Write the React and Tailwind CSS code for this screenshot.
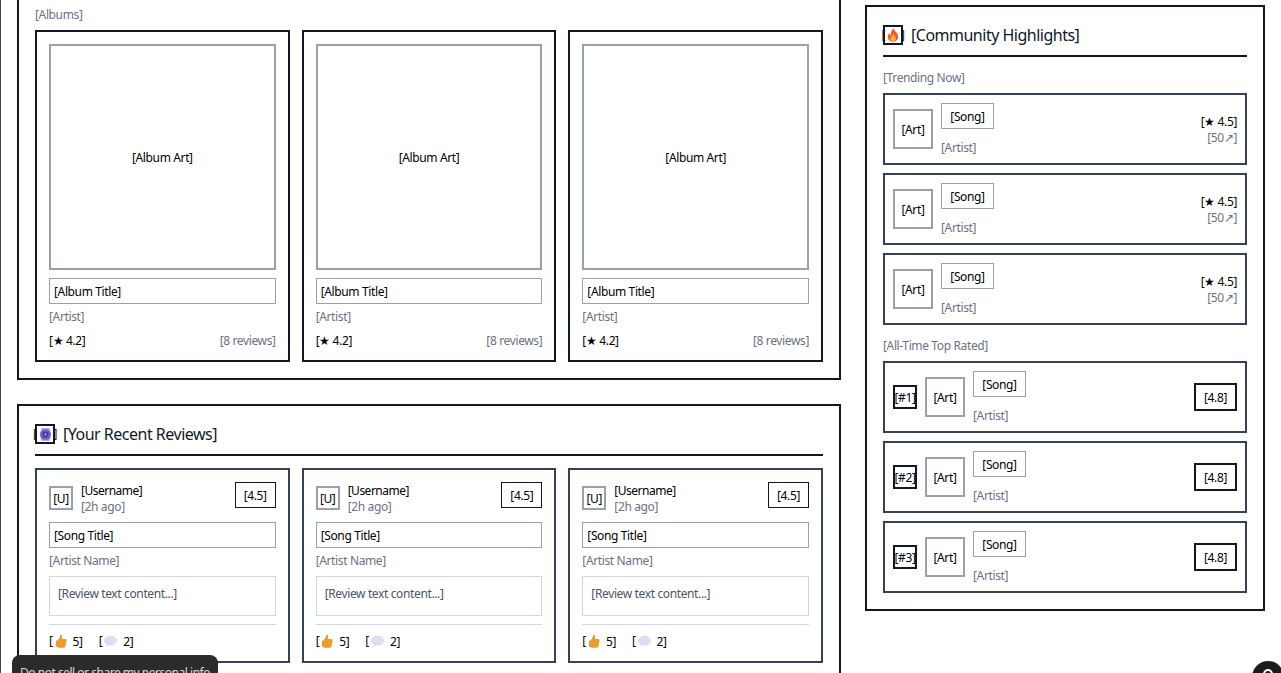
const font = { fontFamily: '"Noto Sans", sans-serif' };

// nudges a text line 1px down without changing the height it takes in the flow
function T({ children }) {
  return <span className="block pt-px -mb-px">{children}</span>;
}

function Flame() {
  return (
    <svg viewBox="0 0 14 16" className="w-[12px] h-[14px] shrink-0">
      <path d="M7.5 0C8 3 12.5 5 13 9.5 13.3 13 10.5 16 7 16S.8 13.2 1 10c.1-2 1.2-3.2 2-4 .2 1 .6 1.8 1.4 2.2C4.2 5 5.5 2 7.5 0Z" fill="#ef5a28" />
      <path d="M7.2 6.5c.4 1.8 3 3 3 5.7 0 2-1.4 3.4-3.2 3.4s-3.2-1.4-3.1-3.2c.1-2.400 2.800-3.500 3.300-5.900Z" fill="#fbb040" />
    </svg>
  );
}

function Disc() {
  return (
    <svg viewBox="0 0 14 14" className="w-[13px] h-[13px] shrink-0">
      <rect x="2" y="0" width="10" height="14" rx="2" fill="#a9a8ec" />
      <circle cx="7" cy="7" r="6" fill="#6f68d8" />
      <circle cx="7" cy="7" r="3.500" fill="#4a3aa8" />
      <circle cx="7" cy="7" r="1" fill="#c9c6f5" />
    </svg>
  );
}

function ThumbIcon() {
  return (
    <svg viewBox="0 0 12 14" className="w-[12px] h-[14px] shrink-0">
      <path d="M5.500 0.500c1 0 1.500.8 1.500 1.700V5h3.200c1 0 1.500.8 1.300 1.700l-1 5.600c-.2.900-.8 1.400-1.700 1.400H4c-.8 0-1.500-.4-2-.9H1V6.500h1.500l2.200-3.300z" fill="#ee9a2d" />
    </svg>
  );
}

function BubbleIcon() {
  return (
    <svg viewBox="0 0 14 12" className="w-[13px] h-[11px] shrink-0">
      <ellipse cx="7" cy="5" rx="6.500" ry="4.800" fill="#e2dcf3" stroke="#c9c0e6" strokeWidth="0.600" />
      <path d="M3.500 8.500 2.500 11.500 6 9.300Z" fill="#d6cdee" />
    </svg>
  );
}

function SectionHeader({ icon, title }) {
  return (
    <div className="flex items-center gap-2 pb-2 mb-3 border-b-2 border-gray-900 text-base leading-6 text-gray-900 tracking-[-0.5px]">
      <span className="w-5 h-5 border-2 border-gray-900 flex items-center justify-center text-xs text-gray-900 shrink-0">
        <span className="-mx-2 flex items-center gap-[2px]">[{icon}]</span>
      </span>
      <h2 className="font-normal">{title}</h2>
    </div>
  );
}

function AlbumCard() {
  return (
    <div className="border-2 border-gray-900 p-3">
      <div className="h-[226px] border-2 border-gray-400 flex items-center justify-center mb-2 text-black"><T>[Album Art]</T></div>
      <div className="border border-gray-400 px-1 py-1 text-black"><T>[Album Title]</T></div>
      <div className="mt-1 mb-2 text-gray-500"><T>[Artist]</T></div>
      <div className="flex justify-between">
        <span className="text-black"><T>[★ 4.2]</T></span>
        <span className="text-gray-500"><T>[8 reviews]</T></span>
      </div>
    </div>
  );
}

function ReviewCard() {
  return (
    <div className="border-2 border-gray-700 p-3">
      <div className="flex justify-between items-start mb-2">
        <div className="flex items-center gap-2">
          <div className="w-6 h-6 border-2 border-gray-400 flex items-center justify-center text-black"><T>[U]</T></div>
          <div>
            <div className="text-black tracking-[-0.5px]"><T>[Username]</T></div>
            <div className="text-gray-500"><T>[2h ago]</T></div>
          </div>
        </div>
        <div className="border border-gray-900 px-2 py-1 w-[41px] text-center text-black"><T>[4.5]</T></div>
      </div>
      <div className="border border-gray-400 px-1 py-1 text-black"><T>[Song Title]</T></div>
      <div className="mt-1 mb-2 text-gray-500"><T>[Artist Name]</T></div>
      <div className="h-10 border border-gray-300 p-2 text-gray-600 mb-2"><T>[Review text content...]</T></div>
      <div className="border-t border-gray-300 pt-2 flex gap-4 text-black">
        <span className="flex items-center gap-[2px]">[<ThumbIcon /><span className="ml-1"><T>5]</T></span></span>
        <span className="flex items-center gap-[2px]">[<BubbleIcon /><span className="ml-1"><T>2]</T></span></span>
      </div>
    </div>
  );
}

function SongMeta() {
  return (
    <div className="flex flex-col items-start">
      <div className="border border-gray-400 px-2 py-1 w-[53px] text-center text-black"><T>[Song]</T></div>
      <div className="mt-[10px] text-gray-500"><T>[Artist]</T></div>
    </div>
  );
}

function Art() {
  return <div className="w-10 h-10 border-2 border-gray-400 flex items-center justify-center text-black shrink-0"><T>[Art]</T></div>;
}

function TrendingRow() {
  return (
    <div className="border-2 border-gray-700 p-2 flex items-center justify-between">
      <div className="flex items-center gap-2">
        <Art />
        <SongMeta />
      </div>
      <div className="text-right">
        <div className="text-black"><T>[★ 4.5]</T></div>
        <div className="text-gray-500"><T>[50↗]</T></div>
      </div>
    </div>
  );
}

function TopRow({ rank }) {
  return (
    <div className="border-2 border-gray-700 p-2 flex items-center justify-between">
      <div className="flex items-center gap-2">
        <div className="w-6 h-6 border-2 border-gray-900 flex items-center justify-center text-black shrink-0"><T>[#{rank}]</T></div>
        <Art />
        <SongMeta />
      </div>
      <div className="border-2 border-gray-900 w-[43px] h-7 flex items-center justify-center text-black"><T>[4.8]</T></div>
    </div>
  );
}

export default function App() {
  return (
    <div style={font} className="relative h-[673px] overflow-hidden bg-white border-l border-[#444] pl-4 text-xs text-gray-900 tracking-[-0.37px]">
      <div className="grid grid-cols-[824px_400px] gap-6 items-start">
        <div className="-mt-3 flex flex-col gap-6">
          <section className="border-2 border-gray-900 p-4">
            <div className="mb-2 text-gray-500"><T>[Albums]</T></div>
            <div className="grid grid-cols-3 gap-3">
              <AlbumCard />
              <AlbumCard />
              <AlbumCard />
            </div>
          </section>
          <section className="border-2 border-gray-900 p-4">
            <SectionHeader icon={<Disc />} title="[Your Recent Reviews]" />
            <div className="grid grid-cols-3 gap-3">
              <ReviewCard />
              <ReviewCard />
              <ReviewCard />
            </div>
          </section>
        </div>

        <aside className="mt-[5px] border-2 border-gray-900 p-4">
          <SectionHeader icon={<Flame />} title="[Community Highlights]" />
          <div className="mb-2 text-gray-500"><T>[Trending Now]</T></div>
          <div className="flex flex-col gap-2 mb-3">
            <TrendingRow />
            <TrendingRow />
            <TrendingRow />
          </div>
          <div className="mb-2 text-gray-500"><T>[All-Time Top Rated]</T></div>
          <div className="flex flex-col gap-2">
            <TopRow rank={1} />
            <TopRow rank={2} />
            <TopRow rank={3} />
          </div>
        </aside>
      </div>

      <div className="absolute left-[11px] top-[655px] w-[206px] h-10 rounded-t-lg bg-[#2b2b2b] px-2 pt-[10px] text-[#d8d8d8] whitespace-nowrap tracking-[-0.48px]">
        Do not sell or share my personal info
      </div>
      <div className="absolute left-[1251px] top-[661px] w-8 h-8 rounded-full bg-[#1c1c1c] flex justify-center pt-[8px]">
        <span className="w-[10px] h-[10px] rounded-full border-2 border-white" />
      </div>
    </div>
  );
}
